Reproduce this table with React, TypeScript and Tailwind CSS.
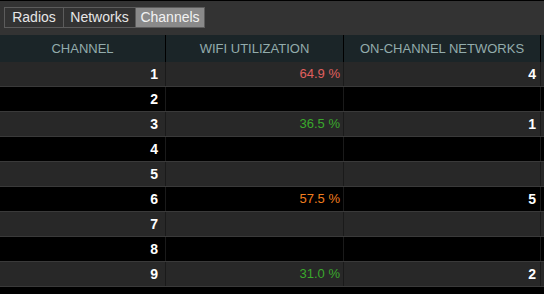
const rows: { ch: number; util?: string; color?: string; nets?: number }[] = [
  { ch: 1, util: "64.9 %", color: "text-[#e0605f]", nets: 4 },
  { ch: 2 },
  { ch: 3, util: "36.5 %", color: "text-[#3aa82c]", nets: 1 },
  { ch: 4 },
  { ch: 5 },
  { ch: 6, util: "57.5 %", color: "text-[#f07d1e]", nets: 5 },
  { ch: 7 },
  { ch: 8 },
  { ch: 9, util: "31.0 %", color: "text-[#3aa82c]", nets: 2 },
];

export default function App() {
  return (
    <div className="h-[294px] w-[544px] overflow-hidden bg-black font-['Liberation_Sans',sans-serif]">
      <div className="flex h-[35px] items-start border-t border-black bg-[#333333] pl-1 pt-[6px]">
        <div className="flex h-[21px] border border-[#5c5c5c] text-[14px] leading-[19px] text-[#e6e6e6]">
          <div className="w-[59px] border-r border-[#5c5c5c] text-center">Radios</div>
          <div className="w-[72px] border-r border-[#5c5c5c] text-center">Networks</div>
          <div className="w-[68px] bg-[#8a8a8a] text-center text-[#f2f2f2]">Channels</div>
        </div>
      </div>
      <div className="flex h-[27px] bg-[#1b2528] text-[13px] leading-[27px] text-[#93acac]">
        <div className="w-[166px] border-r border-black text-center">CHANNEL</div>
        <div className="w-[178px] border-r border-black text-center">WIFI UTILIZATION</div>
        <div className="w-[197px] border-r border-black text-center">ON-CHANNEL NETWORKS</div>
      </div>
      {rows.map((r, i) => (
        <div
          key={r.ch}
          className={`flex h-[25px] border-b border-[#3a3a3a] text-[13px] leading-[24px] ${
            i % 2 === 0 ? "bg-[#282828]" : "bg-black"
          }`}
        >
          <div className="w-[166px] border-r border-[#1a1a1a] pr-[7px] text-right text-[14px] font-bold text-white">{r.ch}</div>
          <div className={`w-[178px] border-r border-[#1a1a1a] pr-[3px] text-right ${r.color ?? ""}`}>{r.util}</div>
          <div className="w-[197px] border-r border-[#1a1a1a] pr-[4px] text-right text-[14px] font-bold text-white">{r.nets}</div>
        </div>
      ))}
    </div>
  );
}
